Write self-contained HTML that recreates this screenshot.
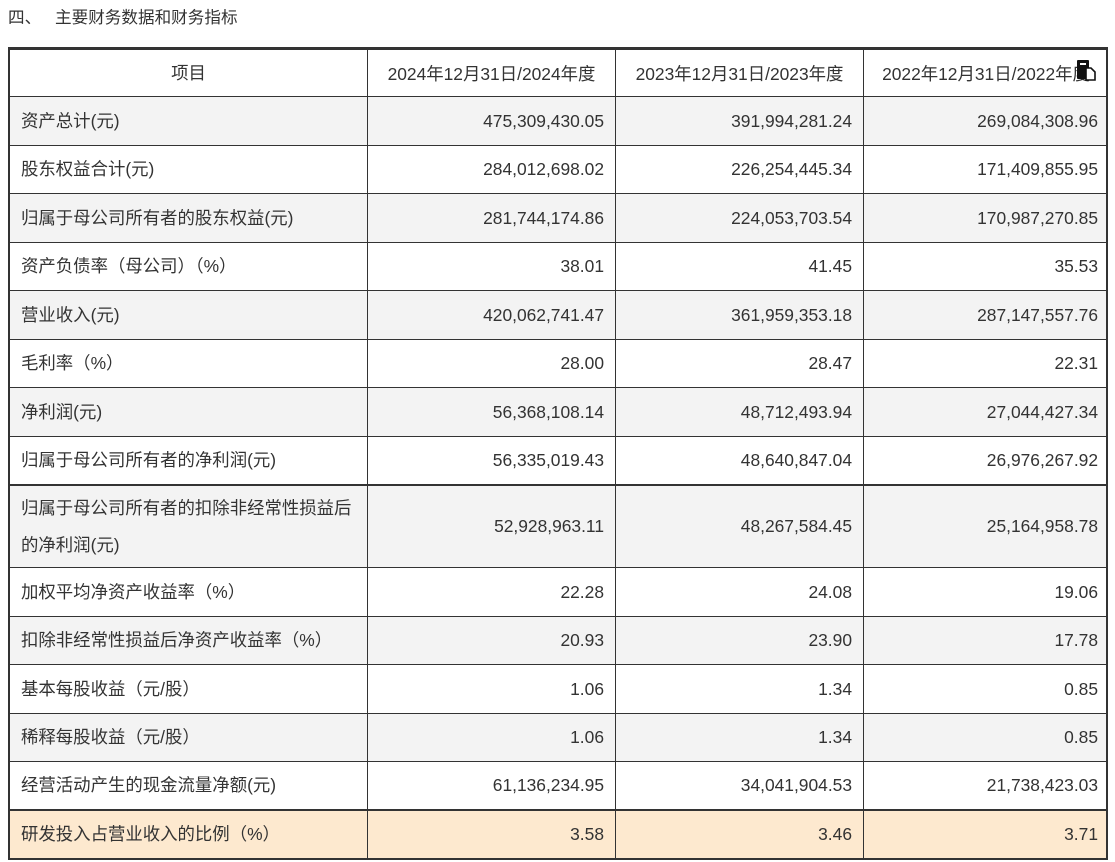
<!DOCTYPE html>
<html><head><meta charset="utf-8"><style>
body{margin:0;width:1115px;height:862px;background:#fff;font-family:"Liberation Sans","Noto Sans CJK SC",sans-serif;color:#333;font-size:17.4px;position:relative;overflow:hidden}
.t{position:absolute;left:8px;top:9px;font-size:16.6px;line-height:18px;white-space:pre}
.r{position:absolute;left:8px;width:1100px;box-sizing:border-box;border-left:2px solid #333;border-right:2px solid #333;border-bottom:1.5px solid #333}
.c{position:absolute;top:0;bottom:0;display:flex;align-items:center;box-sizing:border-box;white-space:nowrap}
.c0{left:0;width:358px;padding-left:11px;border-right:1.5px solid #333;line-height:37px}
.c1{left:358px;width:248px;justify-content:flex-end;padding-right:11px;border-right:1.5px solid #333}
.c2{left:606px;width:248px;justify-content:flex-end;padding-right:11px;border-right:1.5px solid #333}
.c3{left:854px;width:244px;justify-content:flex-end;padding-right:10px}
.h .c{justify-content:center;padding:0}
.g{background:#f3f3f3}.o{background:#fde9cf}
</style></head><body>
<div class="t">四、   主要财务数据和财务指标</div>
<div class="r h" style="top:47px;height:50px;border-top:3px solid #333"><div class="c c0" style="justify-content:center;padding:0">项目</div><div class="c c1">2024年12月31日/2024年度</div><div class="c c2">2023年12月31日/2023年度</div><div class="c c3">2022年12月31日/2022年度<svg style="position:absolute;right:11px;top:9px" width="22" height="22" viewBox="0 0 22 22"><rect x="2" y="1" width="12" height="19" rx="1" fill="#111"/><rect x="5" y="4" width="6" height="2" fill="#fff"/><path d="M11 9h5l4 4v8h-9z" fill="#fff" stroke="#111" stroke-width="1.6"/></svg></div></div>
<div class="r g" style="top:97px;height:49px"><div class="c c0">资产总计(元)</div><div class="c c1">475,309,430.05</div><div class="c c2">391,994,281.24</div><div class="c c3">269,084,308.96</div></div>
<div class="r" style="top:146px;height:48px"><div class="c c0">股东权益合计(元)</div><div class="c c1">284,012,698.02</div><div class="c c2">226,254,445.34</div><div class="c c3">171,409,855.95</div></div>
<div class="r g" style="top:194px;height:49px"><div class="c c0">归属于母公司所有者的股东权益(元)</div><div class="c c1">281,744,174.86</div><div class="c c2">224,053,703.54</div><div class="c c3">170,987,270.85</div></div>
<div class="r" style="top:243px;height:48px"><div class="c c0">资产负债率（母公司）（%）</div><div class="c c1">38.01</div><div class="c c2">41.45</div><div class="c c3">35.53</div></div>
<div class="r g" style="top:291px;height:49px"><div class="c c0">营业收入(元)</div><div class="c c1">420,062,741.47</div><div class="c c2">361,959,353.18</div><div class="c c3">287,147,557.76</div></div>
<div class="r" style="top:340px;height:48px"><div class="c c0">毛利率（%）</div><div class="c c1">28.00</div><div class="c c2">28.47</div><div class="c c3">22.31</div></div>
<div class="r g" style="top:388px;height:49px"><div class="c c0">净利润(元)</div><div class="c c1">56,368,108.14</div><div class="c c2">48,712,493.94</div><div class="c c3">27,044,427.34</div></div>
<div class="r" style="top:437px;height:49px;border-bottom:2.5px solid #333"><div class="c c0">归属于母公司所有者的净利润(元)</div><div class="c c1">56,335,019.43</div><div class="c c2">48,640,847.04</div><div class="c c3">26,976,267.92</div></div>
<div class="r g" style="top:486px;height:82px"><div class="c c0">归属于母公司所有者的扣除非经常性损益后<br>的净利润(元)</div><div class="c c1">52,928,963.11</div><div class="c c2">48,267,584.45</div><div class="c c3">25,164,958.78</div></div>
<div class="r" style="top:568px;height:49px"><div class="c c0">加权平均净资产收益率（%）</div><div class="c c1">22.28</div><div class="c c2">24.08</div><div class="c c3">19.06</div></div>
<div class="r g" style="top:617px;height:48px"><div class="c c0">扣除非经常性损益后净资产收益率（%）</div><div class="c c1">20.93</div><div class="c c2">23.90</div><div class="c c3">17.78</div></div>
<div class="r" style="top:665px;height:49px"><div class="c c0">基本每股收益（元/股）</div><div class="c c1">1.06</div><div class="c c2">1.34</div><div class="c c3">0.85</div></div>
<div class="r g" style="top:714px;height:48px"><div class="c c0">稀释每股收益（元/股）</div><div class="c c1">1.06</div><div class="c c2">1.34</div><div class="c c3">0.85</div></div>
<div class="r" style="top:762px;height:49px;border-bottom:2.5px solid #333"><div class="c c0">经营活动产生的现金流量净额(元)</div><div class="c c1">61,136,234.95</div><div class="c c2">34,041,904.53</div><div class="c c3">21,738,423.03</div></div>
<div class="r o" style="top:811px;height:49px;border-bottom:2px solid #333"><div class="c c0">研发投入占营业收入的比例（%）</div><div class="c c1">3.58</div><div class="c c2">3.46</div><div class="c c3">3.71</div></div>
</body></html>
